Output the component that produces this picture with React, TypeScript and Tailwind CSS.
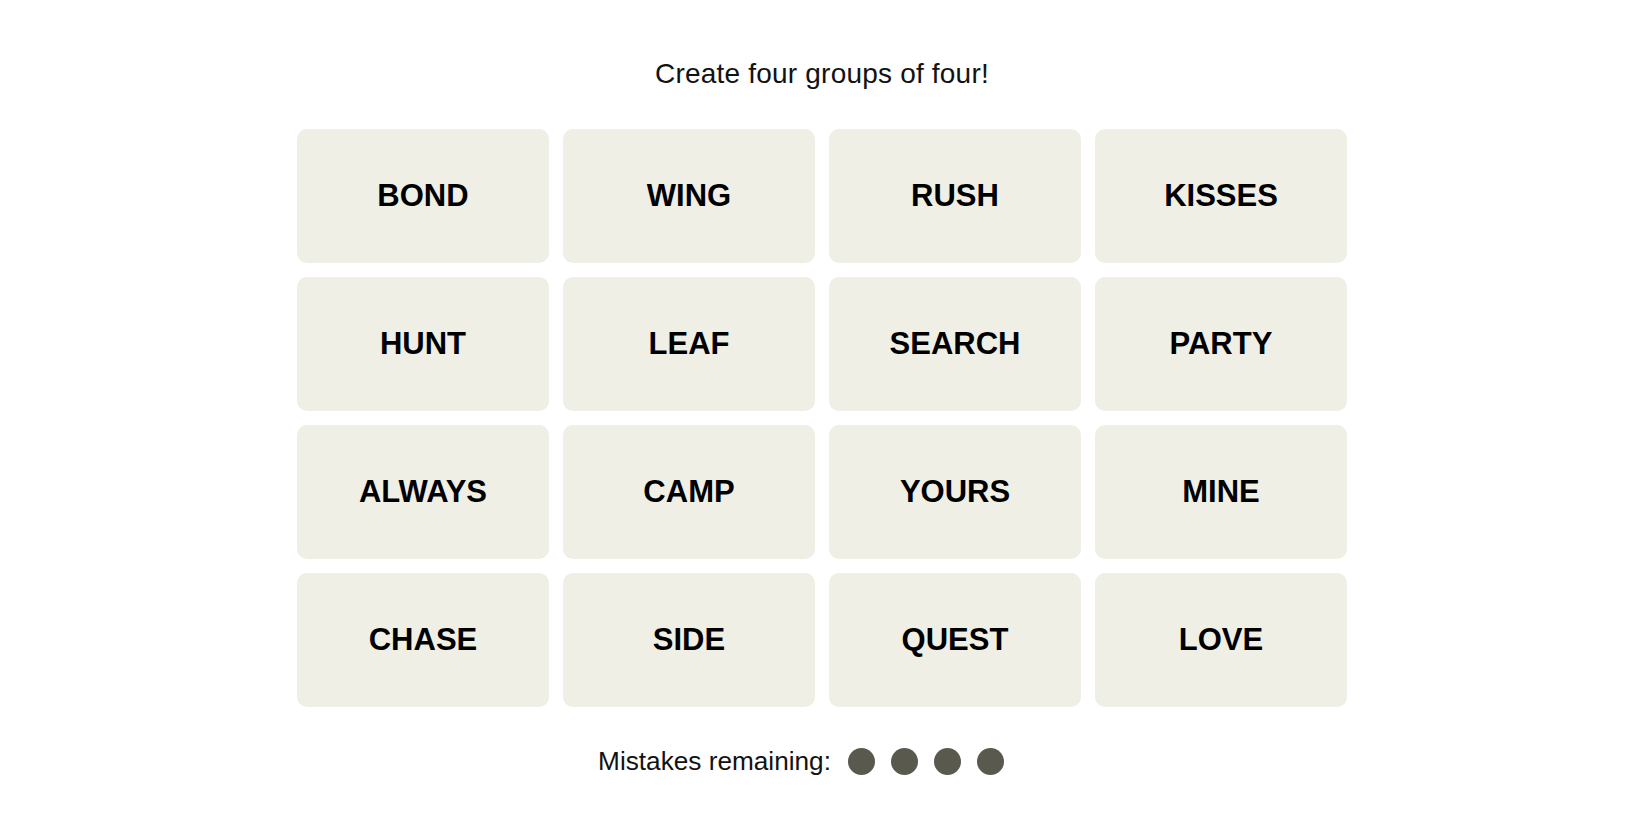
import React from "react";

const words = [
  "BOND", "WING", "RUSH", "KISSES",
  "HUNT", "LEAF", "SEARCH", "PARTY",
  "ALWAYS", "CAMP", "YOURS", "MINE",
  "CHASE", "SIDE", "QUEST", "LOVE",
];

export default function App() {
  return (
    <div className="w-full min-h-[825px] bg-white pr-[6px] flex flex-col items-center pt-[58px] font-['Liberation_Sans',Arial,sans-serif]">
      <p className="h-[32px] leading-[32px] text-[28px] text-[#121212] tracking-[0.2px]">
        Create four groups of four!
      </p>
      <div className="mt-[39px] grid grid-cols-4 gap-[14px] w-[1050px]">
        {words.map((w) => (
          <div
            key={w}
            className="h-[134px] rounded-[10px] bg-[#efefe6] flex items-center justify-center text-[31px] font-bold text-black"
          >
            {w}
          </div>
        ))}
      </div>
      <div className="mt-[38px] h-[32px] flex items-center pr-[42px]">
        <span className="text-[26.2px] text-[#121212] leading-[32px]">
          Mistakes remaining:
        </span>
        <div className="ml-[17px] flex gap-[16px]">
          <span className="w-[27px] h-[27px] rounded-full bg-[#5a594e]" />
          <span className="w-[27px] h-[27px] rounded-full bg-[#5a594e]" />
          <span className="w-[27px] h-[27px] rounded-full bg-[#5a594e]" />
          <span className="w-[27px] h-[27px] rounded-full bg-[#5a594e]" />
        </div>
      </div>
    </div>
  );
}
